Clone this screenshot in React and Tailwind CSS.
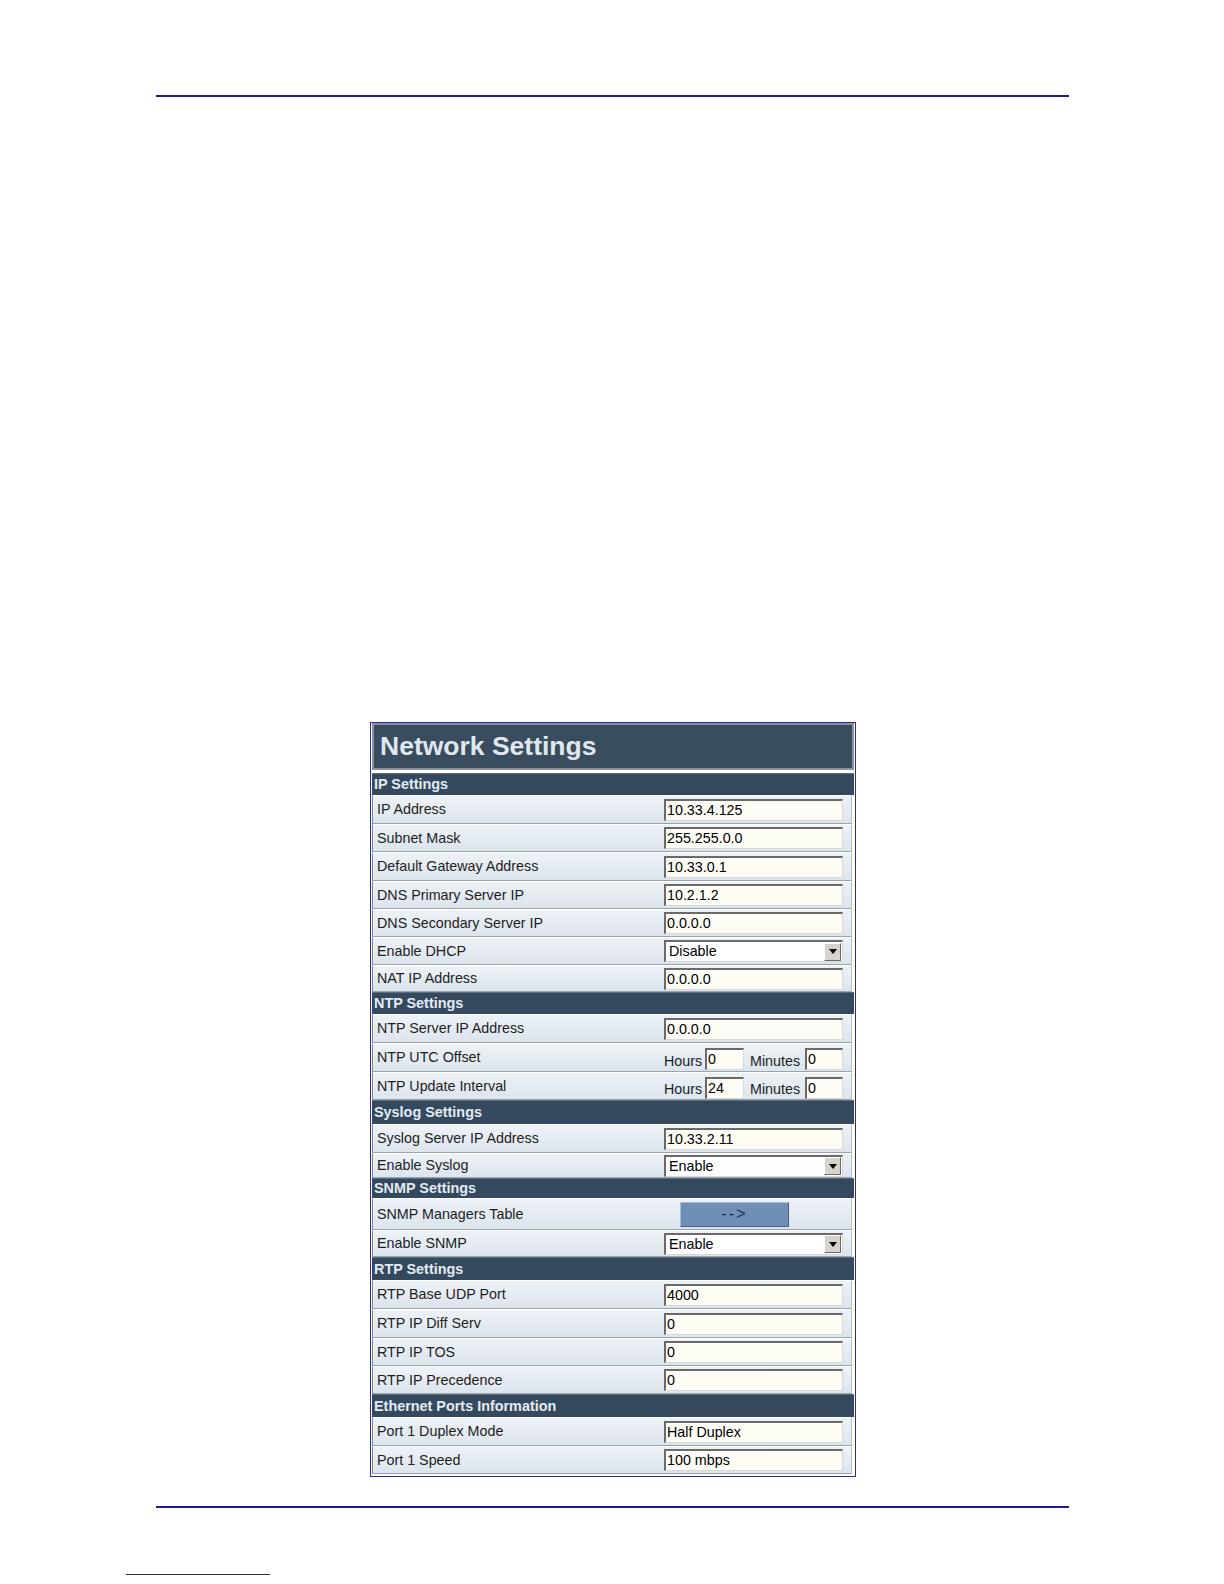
import React from "react";

const F = { fontFamily: '"Liberation Sans", Arial, sans-serif' };

function Header({ children, h }) {
  return (
    <div className={`${h} bg-[#34495d] flex items-center pl-[2px] border-t border-[#5d6d7c] text-[14.4px] font-bold text-[#e3ebf2] leading-none`}>
      {children}
    </div>
  );
}

function Row({ label, children, h = "h-[28px]" }) {
  return (
    <div className={`${h} mr-[2px] flex items-center bg-linear-to-b from-[#edf2f7] to-[#dce4ec] border-l border-r border-b border-l-[#7d858d] border-r-[#b8c0c8] border-b-[#9aa2aa] border-t border-t-white`}>
      <div className="w-[291px] pl-[4px] text-[14.3px] text-[#1e1e1e] leading-none">{label}</div>
      <div className="flex-1 flex items-center">{children}</div>
    </div>
  );
}

function Input({ value, w = "w-[179px]" }) {
  return (
    <div className={`${w} h-[22px] bg-[#fdfdf6] border-t-2 border-l-2 border-t-[#6a6a6a] border-l-[#6a6a6a] border-b border-r border-b-[#d8d8d8] border-r-[#d8d8d8] flex items-center pl-[1px] text-[14.3px] text-black leading-none`}>
      {value}
    </div>
  );
}

function Select({ value }) {
  return (
    <div className="w-[179px] h-[22px] bg-white border-t-2 border-l-2 border-t-[#6a6a6a] border-l-[#6a6a6a] border-b border-r border-b-[#d8d8d8] border-r-[#d8d8d8] flex items-center text-[14.3px] text-black leading-none">
      <div className="flex-1 pl-[3px]">{value}</div>
      <div className="w-[17px] h-[18px] mr-[1px] bg-[#d6d3cc] border-t border-l border-t-white border-l-white border-b border-r border-b-[#6a6a6a] border-r-[#6a6a6a] flex items-center justify-center">
        <svg width="8" height="5" viewBox="0 0 8 5"><path d="M0 0 H8 L4 5 Z" fill="#000" /></svg>
      </div>
    </div>
  );
}

function TimeInputs({ h, m }) {
  return (
    <div className="flex items-center text-[14.3px] text-[#1e1e1e] leading-none pt-[3px]">
      <span className="w-[41px] pt-[4px]">Hours</span>
      <Input value={h} w="w-[39px]" />
      <span className="ml-[6px] w-[55px] pt-[4px]">Minutes</span>
      <Input value={m} w="w-[38px]" />
    </div>
  );
}

export default function App() {
  return (
    <div className="w-[1224px] h-[1584px] bg-white flex flex-col" style={F}>
      <div className="pt-[95px] pl-[156px]">
        <div className="w-[913px] h-[2px] bg-[#1c1c96]" />
      </div>

      <div className="mt-[625px] ml-[370px] w-[486px] border border-[#2a2aa0] bg-white px-[1px] pb-[2px] flex flex-col">
        <div className="h-[47px] bg-[#3a4d5f] border-2 border-[#8794a0] flex items-center pl-[6px]">
          <span className="text-[26.5px] font-bold text-[#dfe8ef] leading-none">Network Settings</span>
        </div>
        <div className="h-[3px]" />

        <Header h="h-[22px]">IP Settings</Header>
        <Row label="IP Address" h="h-[29px]"><Input value="10.33.4.125" /></Row>
        <Row label="Subnet Mask"><Input value="255.255.0.0" /></Row>
        <Row label="Default Gateway Address" h="h-[29px]"><Input value="10.33.0.1" /></Row>
        <Row label="DNS Primary Server IP"><Input value="10.2.1.2" /></Row>
        <Row label="DNS Secondary Server IP"><Input value="0.0.0.0" /></Row>
        <Row label="Enable DHCP"><Select value="Disable" /></Row>
        <Row label="NAT IP Address" h="h-[27px]"><Input value="0.0.0.0" /></Row>

        <Header h="h-[22px]">NTP Settings</Header>
        <Row label="NTP Server IP Address" h="h-[29px]"><Input value="0.0.0.0" /></Row>
        <Row label="NTP UTC Offset" h="h-[29px]"><TimeInputs h="0" m="0" /></Row>
        <Row label="NTP Update Interval"><TimeInputs h="24" m="0" /></Row>

        <Header h="h-[24px]">Syslog Settings</Header>
        <Row label="Syslog Server IP Address" h="h-[29px]"><Input value="10.33.2.11" /></Row>
        <Row label="Enable Syslog" h="h-[25px]"><Select value="Enable" /></Row>

        <Header h="h-[20px]">SNMP Settings</Header>
        <Row label="SNMP Managers Table" h="h-[32px]">
          <div className="ml-[16px] w-[109px] h-[25px] bg-[#6f8fb6] border border-[#4a5f7c] border-t-[#a9bdd4] border-l-[#a9bdd4] flex items-center justify-center text-[16px] tracking-[2px] text-[#1a2a52] leading-none">
            --&gt;
          </div>
        </Row>
        <Row label="Enable SNMP" h="h-[27px]"><Select value="Enable" /></Row>

        <Header h="h-[23px]">RTP Settings</Header>
        <Row label="RTP Base UDP Port" h="h-[29px]"><Input value="4000" /></Row>
        <Row label="RTP IP Diff Serv" h="h-[29px]"><Input value="0" /></Row>
        <Row label="RTP IP TOS"><Input value="0" /></Row>
        <Row label="RTP IP Precedence"><Input value="0" /></Row>

        <Header h="h-[23px]">Ethernet Ports Information</Header>
        <Row label="Port 1 Duplex Mode" h="h-[29px]"><Input value="Half Duplex" /></Row>
        <Row label="Port 1 Speed"><Input value="100 mbps" /></Row>
      </div>

      <div className="mt-[29px] pl-[156px]">
        <div className="w-[913px] h-[2px] bg-[#1c1c96]" />
      </div>
      <div className="mt-[66px] pl-[126px]">
        <div className="w-[144px] h-[1px] bg-[#333]" />
      </div>
    </div>
  );
}
